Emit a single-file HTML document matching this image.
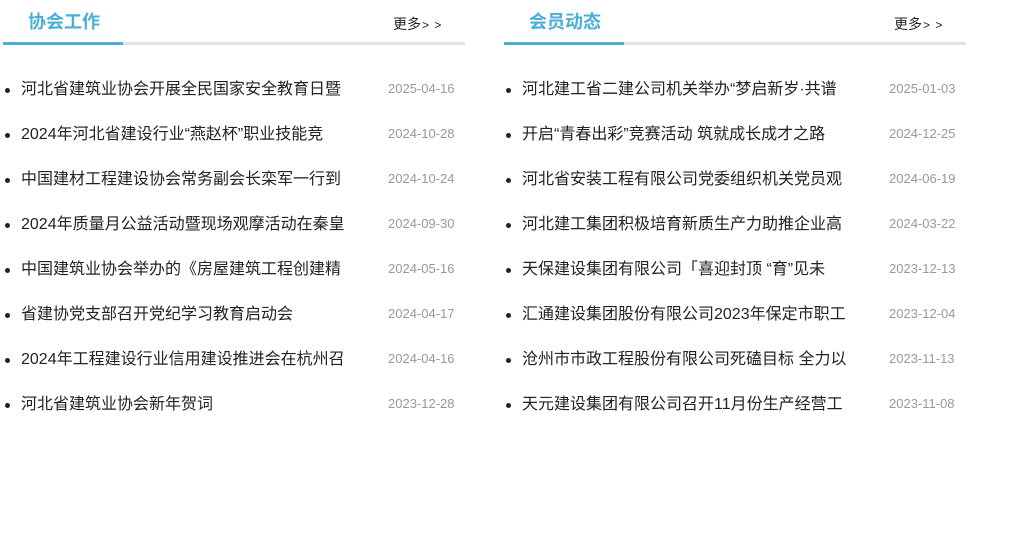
<!DOCTYPE html><html><head><meta charset="utf-8"><style>
body{margin:0;background:#fff;font-family:"Liberation Sans","Noto Sans CJK SC",sans-serif;width:1010px;height:540px;overflow:hidden;position:relative}
.p{position:absolute;top:0;width:462px;height:540px}
.t{position:absolute;left:25px;top:9px;font-size:18px;font-weight:bold;color:#4aafd6;line-height:26px}
.m{position:absolute;left:390px;top:14px;font-size:14px;color:#222;line-height:20px}
.m b{font-weight:normal;font-size:12px;letter-spacing:1px;margin-left:1px}
.g{position:absolute;left:0;top:42px;width:462px;height:3px;background:#e2e2e2}
.b{position:absolute;left:0;top:42px;width:120px;height:3px;background:#4aafd6}
.r{position:absolute;left:0;width:462px;height:22px;line-height:22px}
.r i{position:absolute;left:2px;top:10px;width:5px;height:5px;border-radius:50%;background:#222}
.r s{text-decoration:none;position:absolute;left:18px;top:1px;font-size:16px;color:#222;white-space:nowrap}
.r u{text-decoration:none;position:absolute;left:385px;top:0px;font-size:13px;color:#999}
</style></head><body>
<div class="p" style="left:3px">
<div class="t">协会工作</div><div class="m">更多<b>&gt; &gt;</b></div><div class="g"></div><div class="b"></div>
<div class="r" style="top:78px"><i></i><s>河北省建筑业协会开展全民国家安全教育日暨</s><u>2025-04-16</u></div>
<div class="r" style="top:123px"><i></i><s>2024年河北省建设行业“燕赵杯”职业技能竞</s><u>2024-10-28</u></div>
<div class="r" style="top:168px"><i></i><s>中国建材工程建设协会常务副会长栾军一行到</s><u>2024-10-24</u></div>
<div class="r" style="top:213px"><i></i><s>2024年质量月公益活动暨现场观摩活动在秦皇</s><u>2024-09-30</u></div>
<div class="r" style="top:258px"><i></i><s>中国建筑业协会举办的《房屋建筑工程创建精</s><u>2024-05-16</u></div>
<div class="r" style="top:303px"><i></i><s>省建协党支部召开党纪学习教育启动会</s><u>2024-04-17</u></div>
<div class="r" style="top:348px"><i></i><s>2024年工程建设行业信用建设推进会在杭州召</s><u>2024-04-16</u></div>
<div class="r" style="top:393px"><i></i><s>河北省建筑业协会新年贺词</s><u>2023-12-28</u></div>
</div>
<div class="p" style="left:504px">
<div class="t">会员动态</div><div class="m">更多<b>&gt; &gt;</b></div><div class="g"></div><div class="b"></div>
<div class="r" style="top:78px"><i></i><s>河北建工省二建公司机关举办“梦启新岁·共谱</s><u>2025-01-03</u></div>
<div class="r" style="top:123px"><i></i><s>开启“青春出彩”竞赛活动 筑就成长成才之路</s><u>2024-12-25</u></div>
<div class="r" style="top:168px"><i></i><s>河北省安装工程有限公司党委组织机关党员观</s><u>2024-06-19</u></div>
<div class="r" style="top:213px"><i></i><s>河北建工集团积极培育新质生产力助推企业高</s><u>2024-03-22</u></div>
<div class="r" style="top:258px"><i></i><s>天保建设集团有限公司「喜迎封顶 “育”见未</s><u>2023-12-13</u></div>
<div class="r" style="top:303px"><i></i><s>汇通建设集团股份有限公司2023年保定市职工</s><u>2023-12-04</u></div>
<div class="r" style="top:348px"><i></i><s>沧州市市政工程股份有限公司死磕目标 全力以</s><u>2023-11-13</u></div>
<div class="r" style="top:393px"><i></i><s>天元建设集团有限公司召开11月份生产经营工</s><u>2023-11-08</u></div>
</div>
</body></html>
